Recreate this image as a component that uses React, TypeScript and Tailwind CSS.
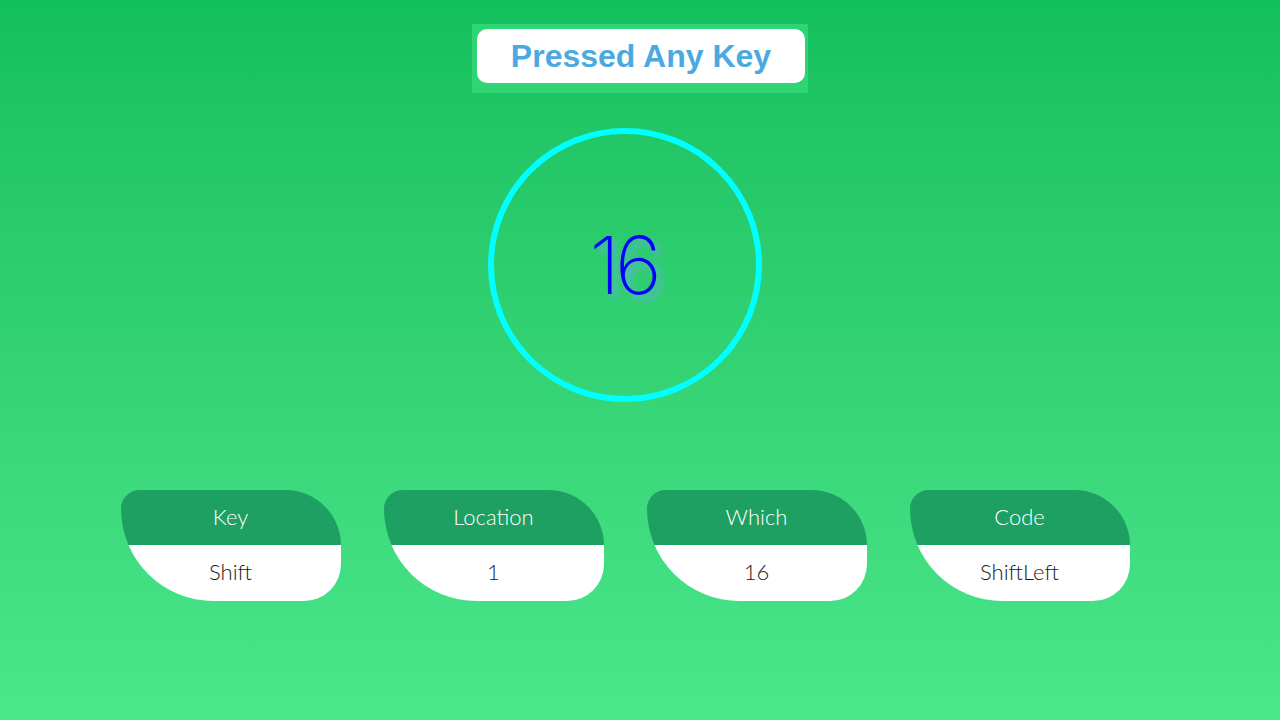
import React from "react";

const items = [
  { label: "Key", value: "Shift" },
  { label: "Location", value: "1" },
  { label: "Which", value: "16" },
  { label: "Code", value: "ShiftLeft" },
];

const App: React.FC = () => {
  return (
    <div className="w-full h-[720px] bg-gradient-to-b from-[#13bf5d] to-[#4ae78b] flex flex-col items-center font-['Lato','Noto_Sans',sans-serif]">
      {/* Titulo */}
      <div className="mt-6 w-[336px] h-[69px] bg-[#2fd575] pt-[5px] pl-[5px] pr-[3px]">
        <div className="h-[54px] bg-white rounded-[10px] flex items-center justify-center">
          <h1 className="font-['Liberation_Sans',Arial,sans-serif] font-bold text-[32px] text-[#4aa9e1]">
            Pressed Any Key
          </h1>
        </div>
      </div>

      {/* Circulo */}
      <div className="mt-[35px] mr-[30px] w-[274px] h-[274px] rounded-full border-[6px] border-[#00ffff] flex items-center justify-center">
        <span className="mr-[4px] font-['Inter',sans-serif] text-[80px] font-extralight leading-none text-[#0000ff] [text-shadow:5px_5px_7px_#6aaedb] tracking-[-5px]">
          16
        </span>
      </div>

      {/* Tarjetas */}
      <div className="mt-[88px] mr-[30px] flex gap-[43px]">
        {items.map((item) => (
          <div
            key={item.label}
            className="w-[220px] h-[111px] rounded-[20px_60px_40px_100px] overflow-hidden flex flex-col"
          >
            <div className="h-[55px] pb-[2px] bg-[#1da062] flex items-center justify-center text-white text-[22px] font-light">
              {item.label}
            </div>
            <div className="flex-1 pb-[3px] bg-white flex items-center justify-center text-[#1a1a1a] text-[22px] font-light">
              {item.value}
            </div>
          </div>
        ))}
      </div>
    </div>
  );
};

export default App;
